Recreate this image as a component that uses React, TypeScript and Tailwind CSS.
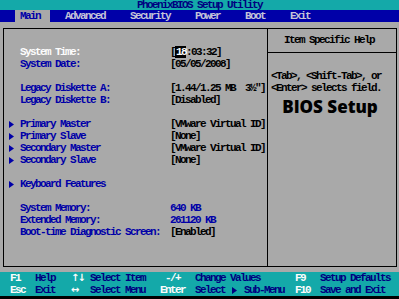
import React from 'react';

const TEAL = 'bg-[#14a9a9]';

type Row =
  | { kind: 'blank' }
  | { kind: 'item'; label: string; value?: React.ReactNode; sub?: boolean; active?: boolean; blueValue?: boolean };

const rows: Row[] = [
  { kind: 'item', label: 'System Time:', active: true, value: 'time' },
  { kind: 'item', label: 'System Date:', value: '[05/05/2008]' },
  { kind: 'blank' },
  { kind: 'item', label: 'Legacy Diskette A:', value: '[1.44/1.25 MB  3½"]' },
  { kind: 'item', label: 'Legacy Diskette B:', value: '[Disabled]' },
  { kind: 'blank' },
  { kind: 'item', label: 'Primary Master', sub: true, value: '[VMware Virtual ID]' },
  { kind: 'item', label: 'Primary Slave', sub: true, value: '[None]' },
  { kind: 'item', label: 'Secondary Master', sub: true, value: '[VMware Virtual ID]' },
  { kind: 'item', label: 'Secondary Slave', sub: true, value: '[None]' },
  { kind: 'blank' },
  { kind: 'item', label: 'Keyboard Features', sub: true },
  { kind: 'blank' },
  { kind: 'item', label: 'System Memory:', value: '640 KB', blueValue: true },
  { kind: 'item', label: 'Extended Memory:', value: '261120 KB', blueValue: true },
  { kind: 'item', label: 'Boot-time Diagnostic Screen:', value: '[Enabled]' },
];

function Arrow({ className = '' }: { className?: string }) {
  return (
    <svg width="5" height="7" viewBox="0 0 5 7" className={className}>
      <path d="M0 0 L5 3.5 L0 7 Z" fill="currentColor" />
    </svg>
  );
}

function MenuBar() {
  return (
    <div className="h-[12px] bg-[#0000a8] flex text-[#c4c4d8] leading-[12px] whitespace-pre">
      <div className="w-[15px]" />
      <div className="w-[35px] pl-[5px] bg-[#a9a9a9] text-[#0000a8]">Main</div>
      <div className="w-[15px]" />
      <div className="w-[65px]">Advanced</div>
      <div className="w-[65px]">Security</div>
      <div className="w-[50px]">Power</div>
      <div className="w-[45px]">Boot</div>
      <div>Exit</div>
    </div>
  );
}

function MainPanel() {
  return (
    <div className="w-[264px] border-r border-black pt-[17px]">
      {rows.map((r, i) =>
        r.kind === 'blank' ? (
          <div key={i} className="h-[12px]" />
        ) : (
          <div key={i} className="h-[12px] leading-[12px] flex items-center whitespace-pre">
            <div className="w-[16px] pl-[5px] flex items-center text-[#0000a8]">
              {r.sub && <Arrow />}
            </div>
            <div className={`w-[150px] ${r.active ? 'text-[#fcfcfc]' : 'text-[#0000a8]'}`}>{r.label}</div>
            <div className={r.blueValue ? 'text-[#0000a8]' : 'text-black'}>
              {r.value === 'time' ? (
                <span>
                  [<span className="bg-black text-[#fcfcfc] pl-[1px]">18</span>:03:32]
                </span>
              ) : (
                r.value
              )}
            </div>
          </div>
        )
      )}
    </div>
  );
}

function HelpPanel() {
  return (
    <div className="flex-1 flex flex-col text-black">
      <div className="h-[24px] pt-[5px] border-b border-black">
        <div className="h-[12px] leading-[12px] pl-[16px] whitespace-pre">Item Specific Help</div>
      </div>
      <div className="pt-[17px] pl-[3px] whitespace-pre">
        <div className="h-[12px] leading-[12px]">&lt;Tab&gt;, &lt;Shift-Tab&gt;, or</div>
        <div className="h-[12px] leading-[12px]">&lt;Enter&gt; selects field.</div>
      </div>
      <div className="mt-[3px] pr-[4px] text-center font-['Open_Sans',sans-serif] font-extrabold text-[17px] leading-[20px] tracking-[0px]">
        BIOS Setup
      </div>
    </div>
  );
}

function Footer() {
  const key = 'text-[#fcfcfc]';
  const desc = 'text-[#000080]';
  return (
    <div className={`${TEAL} h-[24px] whitespace-pre`}>
      <div className="h-[12px] leading-[12px] flex">
        <div className={`w-[35px] pl-[10px] ${key}`}>F1</div>
        <div className={`w-[36px] ${desc}`}>Help</div>
        <div className={`w-[19px] ${key} font-['DejaVu_Sans',sans-serif] tracking-[-2px] text-[10px]`}>↑↓</div>
        <div className={`w-[73px] ${desc}`}>Select Item</div>
        <div className={`w-[32px] pl-[2px] ${key}`}>-/+</div>
        <div className={`w-[100px] ${desc}`}>Change Values</div>
        <div className={`w-[25px] ${key}`}>F9</div>
        <div className={desc}>Setup Defaults</div>
      </div>
      <div className="h-[12px] leading-[12px] flex">
        <div className={`w-[35px] pl-[10px] ${key}`}>Esc</div>
        <div className={`w-[36px] ${desc}`}>Exit</div>
        <div className={`w-[19px] ${key} font-['DejaVu_Sans',sans-serif] text-[10px] tracking-[0px]`}>↔</div>
        <div className={`w-[70px] ${desc}`}>Select Menu</div>
        <div className={`w-[35px] ${key}`}>Enter</div>
        <div className={`w-[100px] ${desc} flex items-center`}>
          Select <Arrow className="mx-[2px]" /> Sub-Menu
        </div>
        <div className={`w-[25px] ${key}`}>F10</div>
        <div className={desc}>Save and Exit</div>
      </div>
    </div>
  );
}

export default function App() {
  return (
    <div className="w-[399px] h-[299px] overflow-hidden bg-black flex flex-col font-['Liberation_Mono',monospace] font-bold text-[11px] tracking-[-1.6px]">
      {/* Title */}
      <div className={`${TEAL} h-[10px] leading-[10px] text-center text-[#000080]`}>PhoenixBIOS Setup Utility</div>
      <MenuBar />

      {/* Body */}
      <div className="h-[250px] bg-[#a9a9a9] pt-[6px] pl-[3px] pr-[2px]">
        <div className="h-[239px] border border-black flex">
          <MainPanel />
          <HelpPanel />
        </div>
      </div>

      <Footer />
    </div>
  );
}
